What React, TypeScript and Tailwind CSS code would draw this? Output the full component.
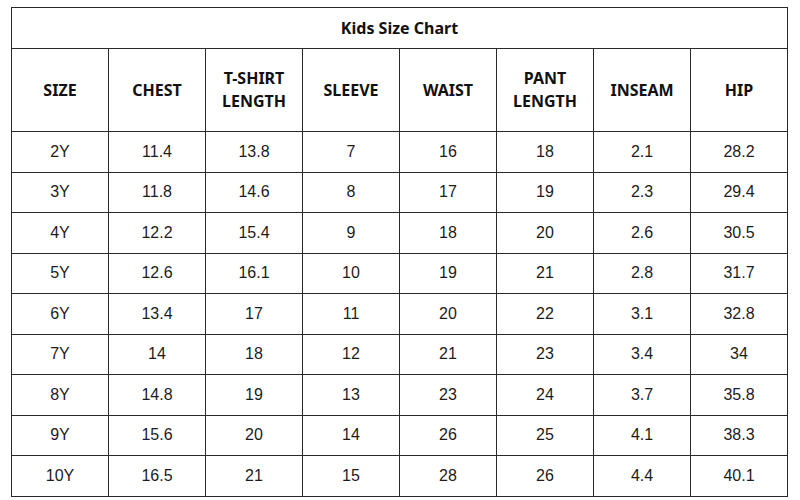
const headers = ["SIZE", "CHEST", "T-SHIRT LENGTH", "SLEEVE", "WAIST", "PANT LENGTH", "INSEAM", "HIP"];

const rows = [
  ["2Y", "11.4", "13.8", "7", "16", "18", "2.1", "28.2"],
  ["3Y", "11.8", "14.6", "8", "17", "19", "2.3", "29.4"],
  ["4Y", "12.2", "15.4", "9", "18", "20", "2.6", "30.5"],
  ["5Y", "12.6", "16.1", "10", "19", "21", "2.8", "31.7"],
  ["6Y", "13.4", "17", "11", "20", "22", "3.1", "32.8"],
  ["7Y", "14", "18", "12", "21", "23", "3.4", "34"],
  ["8Y", "14.8", "19", "13", "23", "24", "3.7", "35.8"],
  ["9Y", "15.6", "20", "14", "26", "25", "4.1", "38.3"],
  ["10Y", "16.5", "21", "15", "28", "26", "4.4", "40.1"],
];

export default function App() {
  return (
    <div
      className="w-[800px] h-[500px] bg-white pl-[11px] pt-[7px]"
      style={{ fontFamily: '"Noto Sans", "Open Sans", sans-serif' }}
    >
      <table className="w-[777px] border-collapse table-fixed text-[#111]">
        <thead>
          <tr className="h-[41px]">
            <th colSpan={8} className="border border-[#2a2a2a] text-[16px] font-bold">
              Kids Size Chart
            </th>
          </tr>
          <tr className="h-[83px]">
            {headers.map((h) => (
              <th
                key={h}
                className="border border-[#2a2a2a] text-[16px] font-bold leading-[23px] px-3"
              >
                {h}
              </th>
            ))}
          </tr>
        </thead>
        <tbody className="font-['Liberation_Sans',Arial,sans-serif]">
          {rows.map((r) => (
            <tr key={r[0]} className="h-[40.5px]">
              {r.map((c, i) => (
                <td
                  key={i}
                  className="border border-[#2a2a2a] text-center text-[16px] text-[#1c1c1c]"
                >
                  {c}
                </td>
              ))}
            </tr>
          ))}
        </tbody>
      </table>
    </div>
  );
}
